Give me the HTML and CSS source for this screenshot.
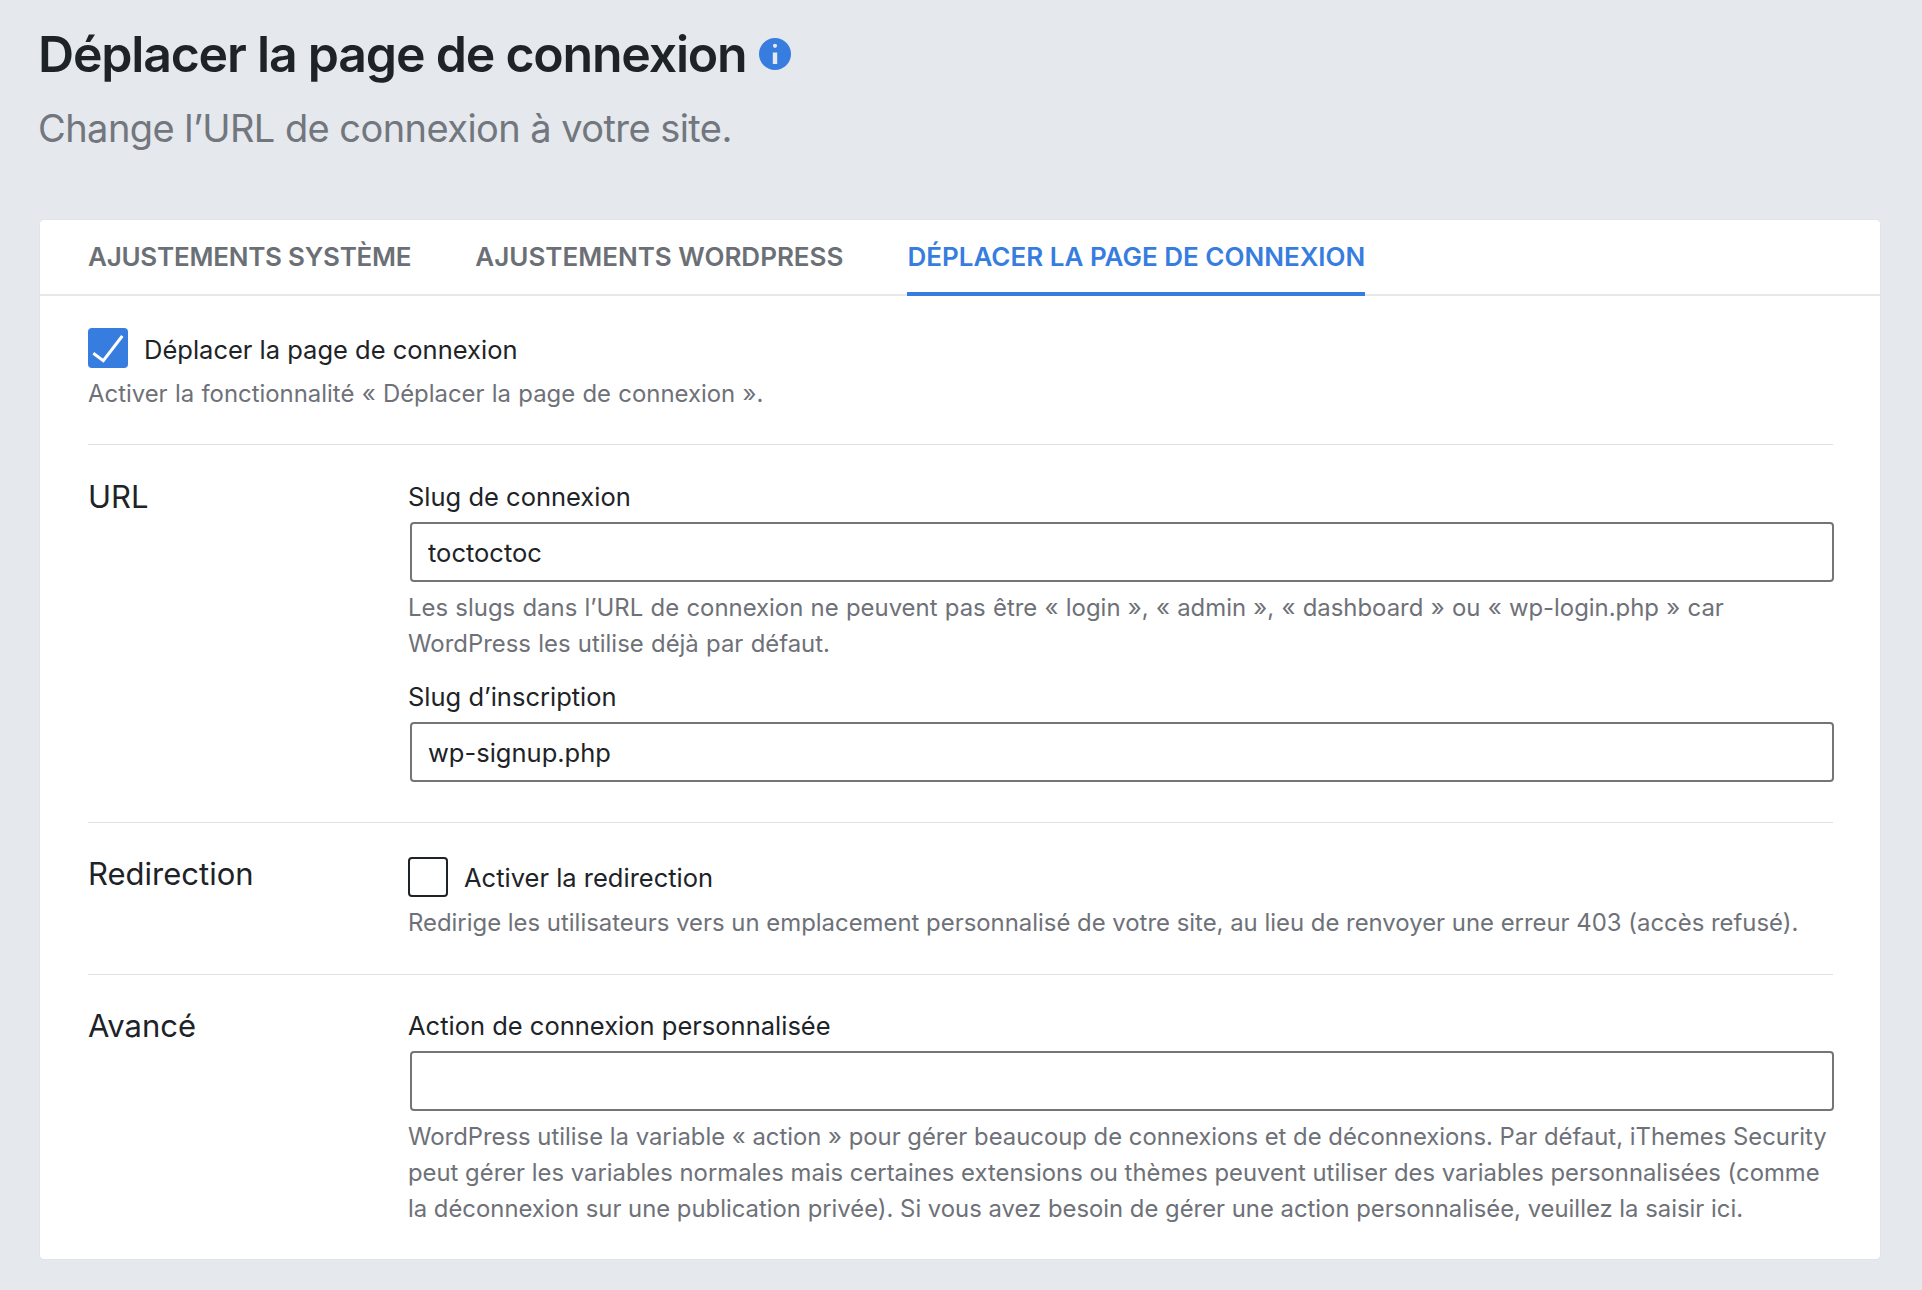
FILE: index.html
```html
<!DOCTYPE html>
<html lang="fr">
  <head>
    <meta charset="UTF-8" />
    <title>Déplacer la page de connexion</title>
    <link rel="stylesheet" href="styles.css">
  </head>

  <body>
    <div class="page-header">
      <h1 class="page-title">
        Déplacer la page de connexion
        <svg class="info-icon" viewBox="0 0 32 32" aria-hidden="true">
          <circle cx="16" cy="16" r="16" fill="#377de0" />
          <circle cx="16" cy="7.8" r="2.1" fill="#e6e9ee" />
          <rect x="13.8" y="14.5" width="4.4" height="11.5" fill="#e6e9ee" />
        </svg>
      </h1>
      <p class="page-subtitle">Change l’URL de connexion à votre site.</p>
    </div>

    <div class="card">
      <div class="tabs">
        <a class="tab">AJUSTEMENTS SYSTÈME</a>
        <a class="tab">AJUSTEMENTS WORDPRESS</a>
        <a class="tab active">DÉPLACER LA PAGE DE CONNEXION</a>
      </div>

      <div class="card-body">
        <div class="section section-first">
          <label class="check-row">
            <span class="checkbox checked">
              <svg viewBox="0 0 40 40" aria-hidden="true">
                <path d="M5.3 25.3 L15.3 32.7 L34.3 8" fill="none" stroke="#fff" stroke-width="3" />
              </svg>
            </span>
            <span class="check-text">Déplacer la page de connexion</span>
          </label>
          <p class="help help-quoted">Activer la fonctionnalité « Déplacer la page de connexion ».</p>
        </div>

        <div class="section row row-url">
          <h2 class="row-title">URL</h2>
          <div class="row-fields">
            <label class="field-label">Slug de connexion</label>
            <input class="text-input" type="text" value="toctoctoc" />
            <p class="help help-quoted">Les slugs dans l’URL de connexion ne peuvent pas être « login », « admin », « dashboard » ou « wp-login.php » car WordPress les utilise déjà par défaut.</p>
            <label class="field-label field-label-next">Slug d’inscription</label>
            <input class="text-input" type="text" value="wp-signup.php" />
          </div>
        </div>

        <div class="section row row-redirect">
          <h2 class="row-title">Redirection</h2>
          <div class="row-fields">
            <label class="check-row">
              <span class="checkbox"></span>
              <span class="check-text">Activer la redirection</span>
            </label>
            <p class="help">Redirige les utilisateurs vers un emplacement personnalisé de votre site, au lieu de renvoyer une erreur 403 (accès refusé).</p>
          </div>
        </div>

        <div class="section row row-advanced">
          <h2 class="row-title">Avancé</h2>
          <div class="row-fields">
            <label class="field-label">Action de connexion personnalisée</label>
            <input class="text-input" type="text" />
            <p class="help help-long">WordPress utilise la variable « action » pour gérer beaucoup de connexions et de déconnexions. Par défaut, iThemes Security peut gérer les variables normales mais certaines extensions ou thèmes peuvent utiliser des variables personnalisées (comme la déconnexion sur une publication privée). Si vous avez besoin de gérer une action personnalisée, veuillez la saisir ici.</p>
          </div>
        </div>
      </div>
    </div>
  </body>
</html>
```

FILE: styles.css
```css
html {
  height: 100%;
}

body {
  margin: 0;
  padding: 0 41px 30px 39px;
  background-color: #e5e8ed;
  color: #1d2327;
  font-family: Inter, "Noto Sans", sans-serif;
  font-size: 25.5px;
  line-height: 36px;
}

.page-header {
  height: 219px;
  box-sizing: border-box;
  margin-left: -1px;
  padding-top: 22px;
}

.page-title {
  display: flex;
  align-items: center;
  gap: 13px;
  margin: 0;
  font-size: 50px;
  font-weight: 600;
  line-height: 64px;
  letter-spacing: -1.2px;
}

.info-icon {
  width: 32px;
  height: 32px;
}

.page-subtitle {
  margin: 15px 0 0;
  color: #72767d;
  font-size: 38px;
  line-height: 54px;
  letter-spacing: -0.56px;
}

.card {
  background-color: #fff;
  border: 1px solid #e0e3e8;
  border-radius: 5px;
}

.tabs {
  display: flex;
  gap: 64px;
  height: 74px;
  padding: 0 48px;
  border-bottom: 2px solid #e8e8e8;
}

.tab {
  height: 76px;
  box-sizing: border-box;
  padding-top: 19px;
  color: #6b6f76;
  font-size: 26px;
  font-weight: 600;
  line-height: 36px;
}

.tab:first-child {
  letter-spacing: -0.25px;
}

.tab.active {
  color: #377de0;
  border-bottom: 4px solid #377de0;
}

.card-body {
  padding: 0 47px 0 48px;
}

.section {
  border-bottom: 1px solid #e0e0e0;
}

.section:last-child {
  border-bottom: none;
}

.section-first {
  height: 149px;
  padding-top: 32px;
  box-sizing: border-box;
}

.row {
  display: grid;
  grid-template-columns: 320px 1fr;
}

.row-url {
  height: 378px;
  padding-top: 34px;
  box-sizing: border-box;
}

.row-redirect {
  height: 152px;
  padding-top: 33px;
  box-sizing: border-box;
}

.row-redirect .row-fields {
  padding-top: 1px;
}

.row-redirect .check-text {
  margin-top: 2px;
}

.row-advanced {
  padding-top: 33px;
  padding-bottom: 32px;
}

.row-title {
  margin: 0;
  font-size: 31px;
  font-weight: 400;
  line-height: 36px;
}

.check-row {
  display: flex;
  align-items: center;
  gap: 16px;
}

.check-text {
  margin-top: 4px;
}

.checkbox {
  display: block;
  width: 40px;
  height: 40px;
  box-sizing: border-box;
  border: 2px solid #1d2327;
  border-radius: 4px;
  background-color: #fff;
}

.checkbox.checked {
  border: none;
  background-color: #377de0;
}

.checkbox svg {
  display: block;
  width: 40px;
  height: 40px;
}

.field-label {
  display: block;
}

.field-label-next {
  margin-top: 17px;
}

.text-input {
  display: block;
  width: calc(100% - 1px);
  height: 60px;
  box-sizing: border-box;
  margin: 7px 0 0 2px;
  padding: 0 16px;
  border: 2px solid #757575;
  border-radius: 4px;
  background-color: #fff;
  color: #1d2327;
  font-family: inherit;
  font-size: 25.5px;
}

.help {
  margin: 8px 0 0;
  color: #6e7178;
  font-size: 23.9px;
  line-height: 36px;
}

/* guillemets sit wider in the original */
.help-quoted {
  word-spacing: 0.6px;
}

.help-long {
  font-size: 23.85px;
}
```
